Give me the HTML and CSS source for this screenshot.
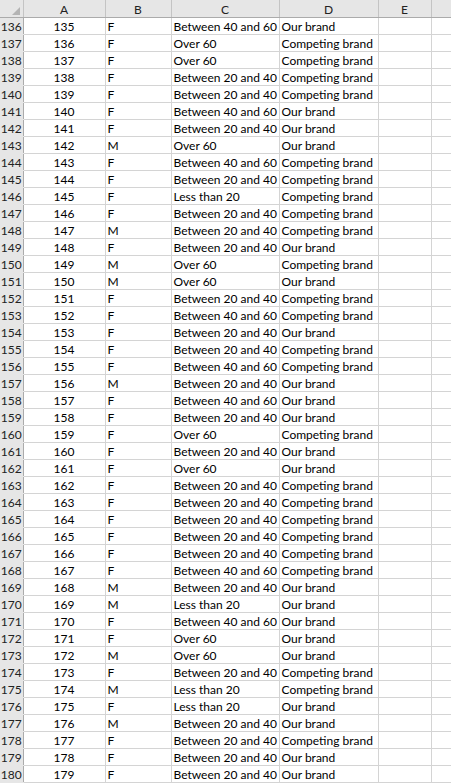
FILE: index.html
```html
<!DOCTYPE html>
<html lang="en">
<head>
    <meta charset="UTF-8">
    <title>Sheet1</title>
    <link rel="stylesheet" href="styles.css">
</head>
<body>
    <table class="sheet">
        <colgroup>
            <col class="col-hdr">
            <col class="col-a">
            <col class="col-b">
            <col class="col-c">
            <col class="col-d">
            <col class="col-e">
            <col class="col-f">
        </colgroup>
        <thead>
            <tr>
                <th class="corner"><span class="tri"></span></th>
                <th>A</th><th>B</th><th>C</th><th>D</th><th>E</th><th></th>
            </tr>
        </thead>
        <tbody>
            <tr><th>136</th><td class="num">135</td><td>F</td><td>Between 40 and 60</td><td>Our brand</td><td></td><td></td></tr>
            <tr><th>137</th><td class="num">136</td><td>F</td><td>Over 60</td><td>Competing brand</td><td></td><td></td></tr>
            <tr><th>138</th><td class="num">137</td><td>F</td><td>Over 60</td><td>Competing brand</td><td></td><td></td></tr>
            <tr><th>139</th><td class="num">138</td><td>F</td><td>Between 20 and 40</td><td>Competing brand</td><td></td><td></td></tr>
            <tr><th>140</th><td class="num">139</td><td>F</td><td>Between 20 and 40</td><td>Competing brand</td><td></td><td></td></tr>
            <tr><th>141</th><td class="num">140</td><td>F</td><td>Between 40 and 60</td><td>Our brand</td><td></td><td></td></tr>
            <tr><th>142</th><td class="num">141</td><td>F</td><td>Between 20 and 40</td><td>Our brand</td><td></td><td></td></tr>
            <tr><th>143</th><td class="num">142</td><td>M</td><td>Over 60</td><td>Our brand</td><td></td><td></td></tr>
            <tr><th>144</th><td class="num">143</td><td>F</td><td>Between 40 and 60</td><td>Competing brand</td><td></td><td></td></tr>
            <tr><th>145</th><td class="num">144</td><td>F</td><td>Between 20 and 40</td><td>Competing brand</td><td></td><td></td></tr>
            <tr><th>146</th><td class="num">145</td><td>F</td><td>Less than 20</td><td>Competing brand</td><td></td><td></td></tr>
            <tr><th>147</th><td class="num">146</td><td>F</td><td>Between 20 and 40</td><td>Competing brand</td><td></td><td></td></tr>
            <tr><th>148</th><td class="num">147</td><td>M</td><td>Between 20 and 40</td><td>Competing brand</td><td></td><td></td></tr>
            <tr><th>149</th><td class="num">148</td><td>F</td><td>Between 20 and 40</td><td>Our brand</td><td></td><td></td></tr>
            <tr><th>150</th><td class="num">149</td><td>M</td><td>Over 60</td><td>Competing brand</td><td></td><td></td></tr>
            <tr><th>151</th><td class="num">150</td><td>M</td><td>Over 60</td><td>Our brand</td><td></td><td></td></tr>
            <tr><th>152</th><td class="num">151</td><td>F</td><td>Between 20 and 40</td><td>Competing brand</td><td></td><td></td></tr>
            <tr><th>153</th><td class="num">152</td><td>F</td><td>Between 40 and 60</td><td>Competing brand</td><td></td><td></td></tr>
            <tr><th>154</th><td class="num">153</td><td>F</td><td>Between 20 and 40</td><td>Our brand</td><td></td><td></td></tr>
            <tr><th>155</th><td class="num">154</td><td>F</td><td>Between 20 and 40</td><td>Competing brand</td><td></td><td></td></tr>
            <tr><th>156</th><td class="num">155</td><td>F</td><td>Between 40 and 60</td><td>Competing brand</td><td></td><td></td></tr>
            <tr><th>157</th><td class="num">156</td><td>M</td><td>Between 20 and 40</td><td>Our brand</td><td></td><td></td></tr>
            <tr><th>158</th><td class="num">157</td><td>F</td><td>Between 40 and 60</td><td>Our brand</td><td></td><td></td></tr>
            <tr><th>159</th><td class="num">158</td><td>F</td><td>Between 20 and 40</td><td>Our brand</td><td></td><td></td></tr>
            <tr><th>160</th><td class="num">159</td><td>F</td><td>Over 60</td><td>Competing brand</td><td></td><td></td></tr>
            <tr><th>161</th><td class="num">160</td><td>F</td><td>Between 20 and 40</td><td>Our brand</td><td></td><td></td></tr>
            <tr><th>162</th><td class="num">161</td><td>F</td><td>Over 60</td><td>Our brand</td><td></td><td></td></tr>
            <tr><th>163</th><td class="num">162</td><td>F</td><td>Between 20 and 40</td><td>Competing brand</td><td></td><td></td></tr>
            <tr><th>164</th><td class="num">163</td><td>F</td><td>Between 20 and 40</td><td>Competing brand</td><td></td><td></td></tr>
            <tr><th>165</th><td class="num">164</td><td>F</td><td>Between 20 and 40</td><td>Competing brand</td><td></td><td></td></tr>
            <tr><th>166</th><td class="num">165</td><td>F</td><td>Between 20 and 40</td><td>Competing brand</td><td></td><td></td></tr>
            <tr><th>167</th><td class="num">166</td><td>F</td><td>Between 20 and 40</td><td>Competing brand</td><td></td><td></td></tr>
            <tr><th>168</th><td class="num">167</td><td>F</td><td>Between 40 and 60</td><td>Competing brand</td><td></td><td></td></tr>
            <tr><th>169</th><td class="num">168</td><td>M</td><td>Between 20 and 40</td><td>Our brand</td><td></td><td></td></tr>
            <tr><th>170</th><td class="num">169</td><td>M</td><td>Less than 20</td><td>Our brand</td><td></td><td></td></tr>
            <tr><th>171</th><td class="num">170</td><td>F</td><td>Between 40 and 60</td><td>Our brand</td><td></td><td></td></tr>
            <tr><th>172</th><td class="num">171</td><td>F</td><td>Over 60</td><td>Our brand</td><td></td><td></td></tr>
            <tr><th>173</th><td class="num">172</td><td>M</td><td>Over 60</td><td>Our brand</td><td></td><td></td></tr>
            <tr><th>174</th><td class="num">173</td><td>F</td><td>Between 20 and 40</td><td>Competing brand</td><td></td><td></td></tr>
            <tr><th>175</th><td class="num">174</td><td>M</td><td>Less than 20</td><td>Competing brand</td><td></td><td></td></tr>
            <tr><th>176</th><td class="num">175</td><td>F</td><td>Less than 20</td><td>Our brand</td><td></td><td></td></tr>
            <tr><th>177</th><td class="num">176</td><td>M</td><td>Between 20 and 40</td><td>Our brand</td><td></td><td></td></tr>
            <tr><th>178</th><td class="num">177</td><td>F</td><td>Between 20 and 40</td><td>Competing brand</td><td></td><td></td></tr>
            <tr><th>179</th><td class="num">178</td><td>F</td><td>Between 20 and 40</td><td>Our brand</td><td></td><td></td></tr>
            <tr><th>180</th><td class="num">179</td><td>F</td><td>Between 20 and 40</td><td>Our brand</td><td></td><td></td></tr>
        </tbody>
    </table>
</body>
</html>
```

FILE: styles.css
```css
:root {
    --grid: #d4d4d4;
    --hdr-bg: #e6e6e6;
    --hdr-line: #c4c4c4;
    --hdr-edge: #ababab;
    --cell-font: Lato, "Open Sans", sans-serif;
}

body {
    margin: 0;
    background: #fff;
    overflow: hidden;
}

.sheet {
    border-collapse: collapse;
    table-layout: fixed;
    width: 460px;
    font-family: var(--cell-font);
    font-size: 12px;
    color: #000;
}

.col-hdr { width: 23px; }
.col-a { width: 82px; }
.col-b { width: 66px; }
.col-c { width: 108px; }
.col-d { width: 99px; }
.col-e { width: 53px; }
.col-f { width: 29px; }

.sheet td, .sheet th {
    height: 15px;
    padding: 1px 0 0 2px;
    border: 1px solid var(--grid);
    line-height: 15px;
    white-space: nowrap;
    overflow: hidden;
    font-weight: normal;
    text-align: left;
}

.sheet td.num {
    text-align: center;
    padding-left: 0;
}

.sheet thead th {
    height: 16px;
    background: var(--hdr-bg);
    text-align: center;
    padding-left: 0;
    color: #222;
    border-top: none;
    border-left-color: var(--hdr-line);
    border-right-color: var(--hdr-line);
    border-bottom-color: var(--hdr-edge);
}

.sheet tbody th {
    background: var(--hdr-bg);
    text-align: center;
    padding-left: 0;
    color: #222;
    border-left: none;
    border-top-color: var(--hdr-bg);
    border-bottom-color: var(--hdr-bg);
    border-right-color: var(--hdr-edge);
}

.sheet .corner {
    position: relative;
    border-left: none;
}

.tri {
    position: absolute;
    right: 3px;
    bottom: 2px;
    width: 0;
    height: 0;
    border-left: 8px solid transparent;
    border-bottom: 8px solid #b4b4b4;
}
```
